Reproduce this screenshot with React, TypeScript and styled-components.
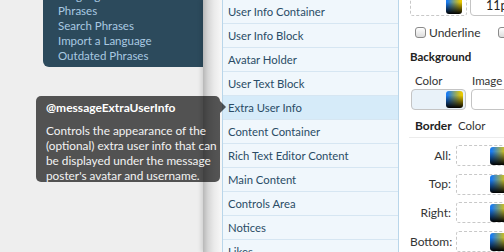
import React from "react";
import styled, { createGlobalStyle } from "styled-components";

const FONT = `"Lato", "Open Sans", "Liberation Sans", sans-serif`;

const Global = createGlobalStyle`
  html, body { margin: 0; padding: 0; background: #eeeeee; }
  body { font-family: ${FONT}; overflow: hidden; }
`;

const Page = styled.div`
  position: relative;
  display: flex;
  width: 504px;
  height: 252px;
  overflow: hidden;
  background: #eeeeee;
`;

const Sidebar = styled.div`
  width: 203px;
  flex: none;
  background: #eeeeee;
`;

const PopupMenu = styled.ul`
  list-style: none;
  margin: -12px 0 0 43px;
  padding: 0 0 4px 15px;
  background: #2c4a5c;
  border-bottom-left-radius: 6px;
`;

const MenuItem = styled.li`
  font-size: 11.5px;
  line-height: 15px;
  color: #a9c9e2;
  white-space: nowrap;
`;

const Main = styled.div`
  flex: 1;
  display: flex;
  padding-left: 19px;
  background: linear-gradient(to right, #b8b8b8 0px, #d6d6d6 5px, #eaeaea 11px, #f5f5f5 17px, #f7f7f7 19px);
  box-shadow: -2px 0 4px rgba(0, 0, 0, 0.12);
`;

const List = styled.ul`
  list-style: none;
  margin: 0;
  padding: 0;
  width: 175px;
  flex: none;
  background: #f0f7fc;
  border-left: 1px solid #b9d6ea;
  border-right: 1px solid #b9d6ea;
`;

const Row = styled.li<{ $active?: boolean }>`
  height: 23px;
  line-height: 23px;
  border-bottom: 1px solid #d6e6f2;
  padding-left: 5px;
  font-size: 11.3px;
  color: #2a4c66;
  white-space: nowrap;
  background: ${(p) => (p.$active ? "#d6ebf9" : "transparent")};
`;

const Editor = styled.div`
  flex: 1;
  background: #ffffff;
  padding-left: 11px;
  color: #333;
  font-size: 11.5px;
  overflow: hidden;
`;

const TopRow = styled.div`
  display: flex;
  gap: 3px;
  margin-top: -5px;
  height: 21px;
`;

const DashedBox = styled.div<{ $w: number }>`
  width: ${(p) => p.$w}px;
  height: 21px;
  box-sizing: border-box;
  border: 1px dashed #c8c8c8;
  border-radius: 3px;
  display: flex;
  justify-content: flex-end;
  align-items: center;
  padding-right: 4px;
  flex: none;
`;

const TextInput = styled.div`
  width: 60px;
  height: 21px;
  box-sizing: border-box;
  border: 1px solid #c4c4c4;
  border-radius: 4px;
  font-size: 12.5px;
  line-height: 19px;
  padding-left: 15px;
  color: #222;
  flex: none;
`;

const Swatch = styled.span<{ $s: number }>`
  display: block;
  width: ${(p) => p.$s}px;
  height: ${(p) => p.$s}px;
  border-radius: 3px;
  flex: none;
  background: linear-gradient(to bottom, rgba(0, 0, 0, 0) 25%, #000 100%),
    linear-gradient(to right, #1a7cf0 10%, #e8c800 90%);
`;

const CheckRow = styled.div`
  display: flex;
  align-items: center;
  height: 13px;
  margin: 10px 0 0 5px;
  font-size: 12px;
`;

const Check = styled.span`
  width: 11px;
  height: 11px;
  box-sizing: border-box;
  border: 1px solid #8a8a8a;
  border-radius: 3px;
  background: linear-gradient(#ffffff, #dcdcdc);
  margin-right: 3px;
  flex: none;
`;

const CheckLabel = styled.span`
  margin-right: 17px;
  white-space: nowrap;
`;

const SectionTitle = styled.div`
  margin-top: 10px;
  font-size: 11.5px;
  font-weight: 700;
  color: #222;
  line-height: 16px;
`;

const LabelRow = styled.div`
  display: flex;
  margin: 9px 0 0 5px;
  font-size: 11.5px;
  line-height: 14px;
`;

const Label = styled.span<{ $w: number }>`
  width: ${(p) => p.$w}px;
  flex: none;
`;

const FieldRow = styled.div`
  display: flex;
  gap: 5px;
  margin: 1px 0 0 1px;
`;

const SolidBox = styled.div<{ $bg: string; $w: number }>`
  width: ${(p) => p.$w}px;
  height: 21px;
  box-sizing: border-box;
  border: 1px solid #c4c4c4;
  border-radius: 4px;
  background: ${(p) => p.$bg};
  display: flex;
  align-items: center;
  justify-content: flex-end;
  padding-right: 2px;
  flex: none;
`;

const BorderHead = styled.div`
  display: flex;
  align-items: baseline;
  margin: 8px 0 0 -1px;
  padding: 0 0 3px 6px;
  border-bottom: 1px solid #ececec;
  line-height: 16px;
`;

const BorderTitle = styled.span`
  font-weight: 700;
  font-size: 12px;
  color: #222;
  width: 43px;
`;

const BorderSub = styled.span`
  font-size: 11.5px;
`;

const SideRows = styled.div`
  display: flex;
  flex-direction: column;
  gap: 7.7px;
  margin-top: 7px;
`;

const SideRow = styled.div`
  display: flex;
  align-items: center;
  height: 21px;
`;

const SideLabel = styled.span`
  width: 41px;
  text-align: right;
  font-size: 12px;
  line-height: 14px;
  color: #333;
  margin-right: 5px;
`;

const SideBox = styled(DashedBox)`
  padding-right: 0;
  border-right: none;
  justify-content: flex-start;
  padding-left: 33px;
`;

const Tooltip = styled.div`
  position: absolute;
  left: 36px;
  top: 96px;
  width: 184px;
  height: 86px;
  box-sizing: border-box;
  padding: 4px 8px 0 10px;
  background: rgba(0, 0, 0, 0.655);
  border-radius: 5px;
  color: #f2f2f2;
  &::after {
    content: "";
    position: absolute;
    right: -6px;
    top: 5px;
    border-style: solid;
    border-width: 6px 0 6px 6px;
    border-color: transparent transparent transparent rgba(0, 0, 0, 0.655);
  }
`;

const TipTitle = styled.div`
  font-weight: 700;
  font-size: 12px;
  line-height: 16px;
  color: #ffffff;
`;

const TipBody = styled.div`
  margin-top: 7px;
  font-size: 11.8px;
  line-height: 15px;
  white-space: nowrap;
`;

const TipLine = styled.span`
  display: block;
`;

const menu = ["Languages", "Phrases", "Search Phrases", "Import a Language", "Outdated Phrases"];
const rows = [
  "User Info Container",
  "User Info Block",
  "Avatar Holder",
  "User Text Block",
  "Extra User Info",
  "Content Container",
  "Rich Text Editor Content",
  "Main Content",
  "Controls Area",
  "Notices",
  "Likes",
];
const sides = ["All:", "Top:", "Right:", "Bottom:"];
const tip = [
  "Controls the appearance of the",
  "(optional) extra user info that can",
  "be displayed under the message",
  "poster's avatar and username.",
];

export default function App() {
  return (
    <>
      <Global />
      <Page>
        <Sidebar>
          <PopupMenu>
            {menu.map((m) => (
              <MenuItem key={m}>{m}</MenuItem>
            ))}
          </PopupMenu>
        </Sidebar>
        <Main>
          <List>
            {rows.map((r) => (
              <Row key={r} $active={r === "Extra User Info"}>
                {r}
              </Row>
            ))}
          </List>
          <Editor>
            <TopRow>
              <DashedBox $w={57}>
                <Swatch $s={16} />
              </DashedBox>
              <TextInput>11px</TextInput>
            </TopRow>
            <CheckRow>
              <Check />
              <CheckLabel>Underline</CheckLabel>
              <Check />
              <CheckLabel>Overline</CheckLabel>
            </CheckRow>
            <SectionTitle>Background</SectionTitle>
            <LabelRow>
              <Label $w={57}>Color</Label>
              <Label $w={40}>Image</Label>
            </LabelRow>
            <FieldRow>
              <SolidBox $bg="#e9f2f9" $w={55}>
                <Swatch $s={17} />
              </SolidBox>
              <SolidBox $bg="#ffffff" $w={60} />
            </FieldRow>
            <BorderHead>
              <BorderTitle>Border</BorderTitle>
              <BorderSub>Color</BorderSub>
            </BorderHead>
            <SideRows>
              {sides.map((s) => (
                <SideRow key={s}>
                  <SideLabel>{s}</SideLabel>
                  <SideBox $w={60}>
                    <Swatch $s={18} />
                  </SideBox>
                </SideRow>
              ))}
            </SideRows>
          </Editor>
        </Main>
        <Tooltip>
          <TipTitle>@messageExtraUserInfo</TipTitle>
          <TipBody>
            {tip.map((t) => (
              <TipLine key={t}>{t}</TipLine>
            ))}
          </TipBody>
        </Tooltip>
      </Page>
    </>
  );
}
